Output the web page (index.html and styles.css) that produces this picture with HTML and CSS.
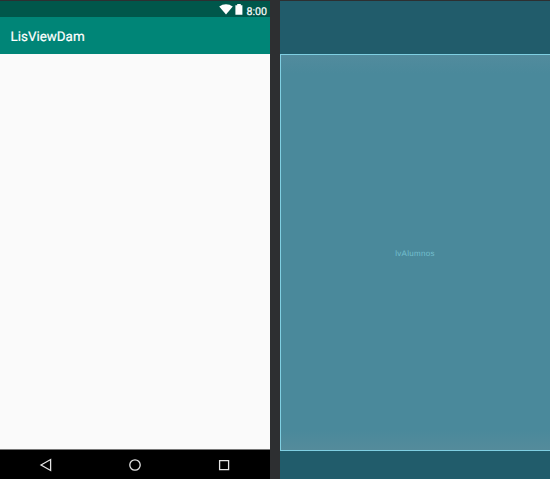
FILE: index.html
```html
<!DOCTYPE html>
<html lang="es">
<head>
<meta charset="utf-8">
<title>LisViewDam</title>
<link rel="stylesheet" href="styles.css">
</head>
<body>
<main class="editor">
  <section class="device">
    <div class="status-bar">
      <svg class="wifi" width="14" height="11" viewBox="0 0 14 11"><path d="M.2 2.6C4-.7 10-.7 13.8 2.6L7 10.6z"/></svg>
      <svg class="battery" width="8" height="11" viewBox="0 0 8 11"><path d="M2.2 0h3.6v1.2h1.6v9.6H.4V1.2h1.8z"/></svg>
      <span class="clock">8:00</span>
    </div>
    <header class="app-bar"><h1>LisViewDam</h1></header>
    <div class="content"></div>
    <nav class="nav-bar">
      <svg width="16" height="16" viewBox="0 0 16 16"><path d="M3 8l9.6-5.5v11z"/></svg>
      <svg width="16" height="16" viewBox="0 0 16 16"><circle cx="8" cy="8" r="5.2"/></svg>
      <svg width="16" height="16" viewBox="0 0 16 16"><path d="M3.6 3.6h9v9h-9z"/></svg>
    </nav>
  </section>
  <section class="blueprint">
    <div class="blueprint-list"><span class="label">lvAlumnos</span></div>
  </section>
</main>
</body>
</html>
```

FILE: styles.css
```css
* { box-sizing: border-box; }
body { margin: 0; background: #2d2f31; text-rendering: geometricPrecision; }
.editor {
  display: grid;
  grid-template-columns: 270px 270px;
  column-gap: 10px;
  height: 479px;
  padding-top: 1px;
  overflow: hidden;
}
.device {
  display: grid;
  grid-template-rows: 16px 37px 395px 30px;
  font-family: Roboto, sans-serif;
}
.status-bar {
  display: flex;
  justify-content: flex-end;
  padding: 3px 3px 0 0;
  background: #00574b;
  color: #fff;
}
.status-bar svg { fill: #fff; }
.wifi { margin-right: 2px; }
.battery { margin-right: 3px; }
.clock { font-size: 10.7px; font-weight: 400; line-height: 15px; -webkit-text-stroke: 0.2px #fff; }
.app-bar {
  display: flex;
  align-items: center;
  padding-left: 10.5px;
  background: #008577;
  color: #fff;
}
.app-bar h1 { margin: 4px 0 0; font-size: 13.4px; font-weight: 400; line-height: 16px; -webkit-text-stroke: 0.2px #fff; }
.content { background: #fafafa; }
.nav-bar {
  display: flex;
  justify-content: space-between;
  padding: 7px 38px 0 38px;
  border-top: 1px solid #777;
  background: #000;
}
.nav-bar svg { fill: none; stroke: #e4e4e4; stroke-width: 1.3; }
.blueprint { padding-top: 53px; background: #215c6b; }
.blueprint-list {
  display: flex;
  align-items: center;
  justify-content: center;
  height: 397px;
  border: solid #7fcfe2;
  border-width: 1px 0 1px 1px;
  background: linear-gradient(#528b9d, #4a899b 18px, #4a899b 375px, #548b9b);
  color: #73bfce;
  font: 8px/10px "Liberation Sans", sans-serif;
}
.label { margin: 2px 1px 0 0; letter-spacing: 0.3px; }
```
